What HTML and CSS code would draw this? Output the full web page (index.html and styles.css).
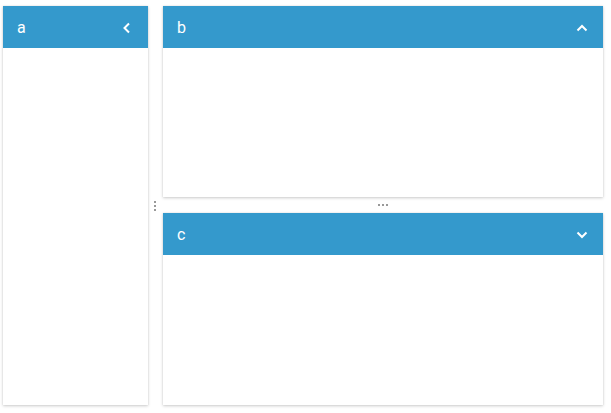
FILE: index.html
```html
<!DOCTYPE html>
<html>
<head>
<meta charset="utf-8">
<link rel="stylesheet" href="styles.css">
</head>
<body>
<div class="layout">
  <section class="panel panel-a">
    <header class="panel-head"><span class="title">a</span>
      <svg class="icon" width="12" height="12" viewBox="0 0 12 12"><path d="M8 1.5 L3.5 6 L8 10.5" fill="none" stroke="#fff" stroke-width="2"/></svg>
    </header>
    <div class="panel-body"></div>
  </section>
  <div class="vsplit"><span class="dots vdots"><i></i><i></i><i></i></span></div>
  <div class="column">
    <section class="panel panel-b">
      <header class="panel-head"><span class="title">b</span>
        <svg class="icon" width="12" height="12" viewBox="0 0 12 12"><path d="M1.5 8.5 L6 4 L10.5 8.5" fill="none" stroke="#fff" stroke-width="2"/></svg>
      </header>
      <div class="panel-body"></div>
    </section>
    <div class="hsplit"><span class="dots hdots"><i></i><i></i><i></i></span></div>
    <section class="panel panel-c">
      <header class="panel-head"><span class="title">c</span>
        <svg class="icon" width="12" height="12" viewBox="0 0 12 12"><path d="M1.5 3.5 L6 8 L10.5 3.5" fill="none" stroke="#fff" stroke-width="2"/></svg>
      </header>
      <div class="panel-body"></div>
    </section>
  </div>
</div>
</body>
</html>
```
FILE: styles.css
```css
html, body { margin: 0; padding: 0; background: #fff; }
body { font-family: Roboto, "Noto Sans", sans-serif; width: 611px; height: 413px; overflow: hidden; }
.layout { display: flex; box-sizing: border-box; height: 413px; padding: 6px 8px 8px 3px; }
.panel { display: flex; flex-direction: column; background: #fff; box-shadow: 0 1px 3px rgba(0,0,0,0.2), 0 0 1px rgba(0,0,0,0.12); }
.panel-a { width: 145px; flex: none; }
.panel-head { height: 42px; flex: none; background: #3499cc; color: #fff; display: flex; align-items: center; justify-content: space-between; padding: 1px 15px 0 14px; box-sizing: border-box; }
.title { font-size: 16px; line-height: 1; }
.icon { display: block; }
.panel-body { flex: 1; }
.vsplit { width: 15px; flex: none; display: flex; align-items: center; justify-content: center; }
.column { flex: 1; display: flex; flex-direction: column; }
.panel-b { height: 191px; flex: none; }
.panel-c { flex: 1; }
.hsplit { height: 16px; flex: none; display: flex; align-items: center; justify-content: center; }
.dots { display: flex; gap: 2px; }
.vdots { flex-direction: column; margin-left: -1px; }
.hdots { flex-direction: row; margin-top: -1px; }
.dots i { width: 2px; height: 2px; background: #999; display: block; }
```
